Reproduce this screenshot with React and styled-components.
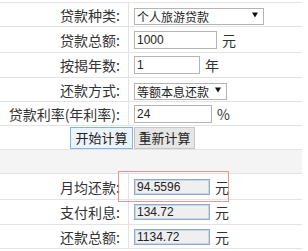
import React from "react";
import styled, { createGlobalStyle, css } from "styled-components";

const Global = createGlobalStyle`
  html, body { margin: 0; padding: 0; background: #fff; }
  body {
    width: 308px; height: 251px; overflow: hidden;
    font-family: "Noto Sans CJK SC", "Liberation Sans", sans-serif;
    color: #333;
  }
`;

const Page = styled.div`
  position: relative;
  width: 308px;
  height: 251px;
  overflow: hidden;
`;

const Table = styled.div`
  margin-left: -37px;
  margin-top: 2px;
  width: 339px;
  border-top: 1px solid #e6e6e6;
`;

const Row = styled.div`
  display: grid;
  grid-template-columns: 166px 1fr;
  height: ${(p) => p.$h}px;
  border-bottom: 1px solid #e3e3e3;
`;

const Label = styled.div`
  display: flex;
  align-items: center;
  justify-content: flex-end;
  padding-right: 8px;
  border-right: 1px solid #e3e3e3;
  font-size: 14px;
  line-height: 1;
  white-space: nowrap;
`;

const Field = styled.div`
  display: flex;
  align-items: center;
  gap: 5px;
  padding-left: 5px;
  font-size: 14px;
`;

const Unit = styled.span`
  font-size: 14px;
  line-height: 1;
`;

const TextInput = styled.input`
  box-sizing: border-box;
  width: ${(p) => p.$w}px;
  height: ${(p) => (p.$result ? 16 : 18)}px;
  margin: 0;
  padding: 0 2px;
  font-family: "Liberation Sans", "Noto Sans CJK SC", sans-serif;
  font-size: 12px;
  color: #222;
  outline: none;
  ${(p) =>
    p.$result
      ? css`
          border: 1px solid #8faacb;
          box-shadow: inset 0 0 0 1px #c9d6e6;
          background: #efefef;
        `
      : css`
          border: 1px solid #b4b4b4;
          background: #fff;
        `}
`;

const SelectWrap = styled.div`
  position: relative;
  width: ${(p) => p.$w}px;
  height: 17px;
`;

const Select = styled.select`
  appearance: none;
  -webkit-appearance: none;
  box-sizing: border-box;
  width: 100%;
  height: 100%;
  margin: 0;
  padding: 0 0 0 2px;
  border: 1px solid #b4b4b4;
  border-radius: 0;
  background: #fff;
  font-family: "Noto Sans CJK SC", sans-serif;
  font-size: 12px;
  line-height: 15px;
  color: #222;
  outline: none;
`;

const Arrow = styled.span`
  position: absolute;
  right: 6px;
  top: 50%;
  transform: translateY(-50%);
  width: 0;
  height: 0;
  border-left: 3px solid transparent;
  border-right: 3px solid transparent;
  border-top: 5px solid #111;
  pointer-events: none;
`;

const ButtonRow = styled.div`
  display: flex;
  justify-content: center;
  align-items: center;
  gap: 1px;
  height: ${(p) => p.$h}px;
  border-bottom: 1px solid #e3e3e3;
`;

const Button = styled.button`
  box-sizing: border-box;
  height: 22px;
  margin: 0;
  padding: 0;
  white-space: nowrap;
  font-family: "Noto Sans CJK SC", sans-serif;
  font-size: 13px;
  line-height: 1;
  color: #222;
  border-radius: 0;
  ${(p) =>
    p.$focused
      ? css`
          width: 63px;
          border: 1px solid #7eb4ea;
          background: #eef4fb;
        `
      : css`
          width: 61px;
          border: 1px solid #c4c4c4;
          background: #e6e6e6;
        `}
`;

const GrayRow = styled.div`
  height: ${(p) => p.$h}px;
  background: #f4f4f4;
  border-bottom: 1px solid #e3e3e3;
`;

const Highlight = styled.div`
  position: absolute;
  left: 118px;
  top: 171px;
  width: 109px;
  height: 29px;
  border: 1px solid rgba(240, 110, 110, 0.75);
  pointer-events: none;
`;

function SelectField({ w, options }) {
  return (
    <SelectWrap $w={w}>
      <Select defaultValue={options[0]}>
        {options.map((o) => (
          <option key={o}>{o}</option>
        ))}
      </Select>
      <Arrow />
    </SelectWrap>
  );
}

export default function App() {
  return (
    <Page>
      <Global />
      <Table>
        <Row $h={23}>
          <Label>贷款种类:</Label>
          <Field>
            <SelectField w={130} options={["个人旅游贷款", "个人住房贷款"]} />
          </Field>
        </Row>
        <Row $h={25}>
          <Label>贷款总额:</Label>
          <Field>
            <TextInput $w={83} defaultValue="1000" />
            <Unit>元</Unit>
          </Field>
        </Row>
        <Row $h={24}>
          <Label>按揭年数:</Label>
          <Field>
            <TextInput $w={66} defaultValue="1" />
            <Unit>年</Unit>
          </Field>
        </Row>
        <Row $h={23}>
          <Label>还款方式:</Label>
          <Field>
            <SelectField w={93} options={["等额本息还款", "等额本金还款"]} />
          </Field>
        </Row>
        <Row $h={23}>
          <Label>贷款利率(年利率):</Label>
          <Field>
            <TextInput $w={78} defaultValue="24" />
            <Unit>%</Unit>
          </Field>
        </Row>
        <ButtonRow $h={23}>
          <Button $focused>开始计算</Button>
          <Button>重新计算</Button>
        </ButtonRow>
        <GrayRow $h={23} />
        <Row $h={25}>
          <Label>月均还款:</Label>
          <Field>
            <TextInput $result $w={76} readOnly defaultValue="94.5596" />
            <Unit>元</Unit>
          </Field>
        </Row>
        <Row $h={24}>
          <Label>支付利息:</Label>
          <Field>
            <TextInput $result $w={76} readOnly defaultValue="134.72" />
            <Unit>元</Unit>
          </Field>
        </Row>
        <Row $h={23}>
          <Label>还款总额:</Label>
          <Field>
            <TextInput $result $w={76} readOnly defaultValue="1134.72" />
            <Unit>元</Unit>
          </Field>
        </Row>
      </Table>
      <Highlight />
    </Page>
  );
}
